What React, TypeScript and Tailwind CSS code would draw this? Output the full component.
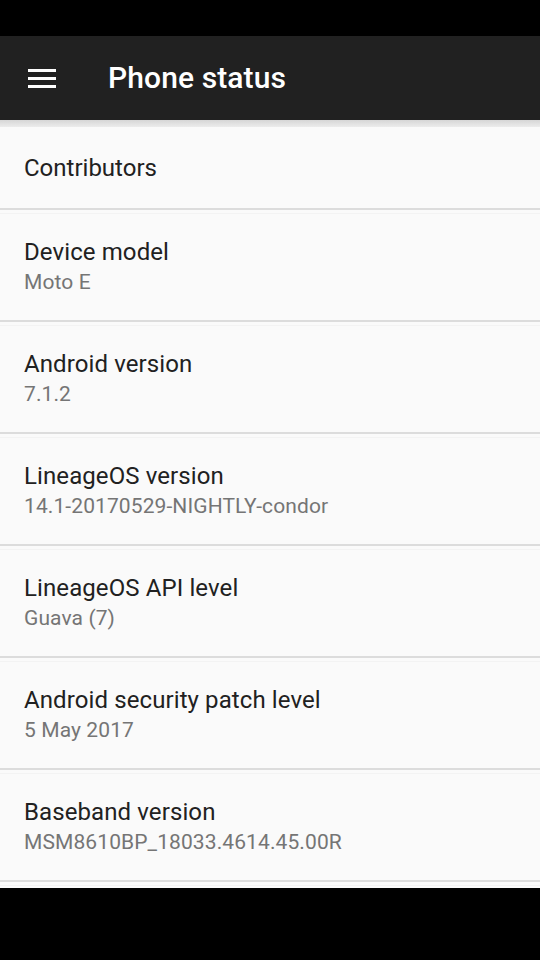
const items: { title: string; summary?: string }[] = [
  { title: "Device model", summary: "Moto E" },
  { title: "Android version", summary: "7.1.2" },
  { title: "LineageOS version", summary: "14.1-20170529-NIGHTLY-condor" },
  { title: "LineageOS API level", summary: "Guava (7)" },
  { title: "Android security patch level", summary: "5 May 2017" },
  { title: "Baseband version", summary: "MSM8610BP_18033.4614.45.00R" },
];

function Divider() {
  return (
    <div className="flex flex-col">
      <div className="h-[2px] bg-[#dcdcdc]" />
      <div className="h-[3px]" />
      <div className="h-px bg-[#f3f3f3]" />
    </div>
  );
}

export default function App() {
  return (
    <div
      className="flex h-[960px] w-[540px] flex-col bg-black"
      style={{ fontFamily: "Roboto, 'Noto Sans', sans-serif" }}
    >
      {/* status bar */}
      <div className="h-[36px] shrink-0 bg-black" />

      {/* toolbar */}
      <div className="flex h-[84px] shrink-0 items-center bg-[#212121]">
        <button type="button" aria-label="Menu" className="ml-[28px] flex w-[28px] flex-col gap-[5px]">
          <span className="block h-[3px] w-[28px] bg-white" />
          <span className="block h-[3px] w-[28px] bg-white" />
          <span className="block h-[3px] w-[28px] bg-white" />
        </button>
        <h1 className="ml-[52px] text-[30px] font-medium leading-none tracking-[0.1px] text-white">
          Phone status
        </h1>
      </div>

      {/* list */}
      <div className="flex flex-col bg-[#fafafa]">
        {/* toolbar shadow / top divider */}
        <div className="h-[7px] bg-gradient-to-b from-[#d6d6d6] to-[#ececec]" />

        <div className="flex h-[81px] items-center px-6 pt-px text-[24px] leading-none text-[#212121]">
          Contributors
        </div>
        <Divider />

        {items.map((it) => (
          <div key={it.title} className="flex flex-col">
            <div className="flex h-[106px] flex-col justify-center px-6">
              <div className="text-[24px] leading-[30px] tracking-[0.1px] text-[#212121]">{it.title}</div>
              <div className="text-[21px] leading-[30px] tracking-[0.1px] text-[#757575]">{it.summary}</div>
            </div>
            <Divider />
          </div>
        ))}
        <div className="h-[2px] bg-[#fafafa]" />
      </div>

      <div className="flex-1 bg-black" />
    </div>
  );
}
